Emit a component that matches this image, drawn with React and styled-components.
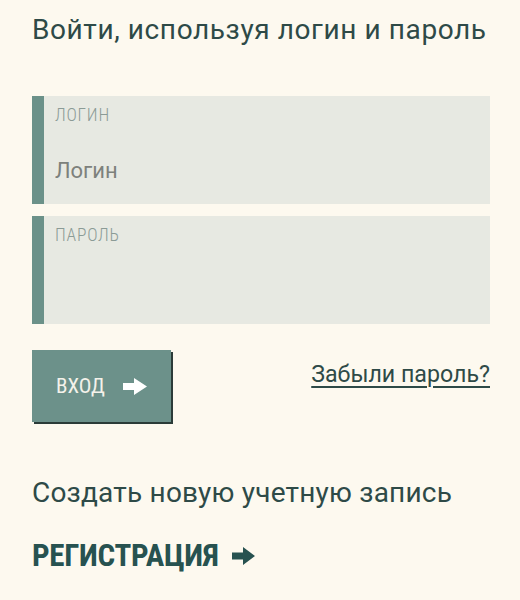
import React, { useState } from 'react';
import styled, { createGlobalStyle } from 'styled-components';

const GlobalStyle = createGlobalStyle`
  html, body {
    margin: 0;
    padding: 0;
    background: #fdf9ef;
  }
  body {
    font-family: Roboto, "Noto Sans", sans-serif;
    color: #2e4a47;
  }
`;

export default function App() {
  const [Login, setLogin] = useState('');
  const [Password, setPassword] = useState('');

  const onLoginHandler = event => {
    setLogin(event.currentTarget.value);
  };
  const onPasswordHandler = event => {
    setPassword(event.currentTarget.value);
  };
  const onSubmitHandler = event => {
    event.preventDefault();
  };

  return (
    <Page>
      <GlobalStyle />
      <Title>Войти, используя логин и пароль</Title>
      <Form onSubmit={onSubmitHandler}>
        <Field>
          <FieldLabel>Логин</FieldLabel>
          <FieldInput
            type="text"
            placeholder="Логин"
            value={Login}
            onChange={onLoginHandler}
          />
        </Field>
        <Field>
          <FieldLabel>Пароль</FieldLabel>
          <FieldInput
            type="password"
            value={Password}
            onChange={onPasswordHandler}
          />
        </Field>
        <Actions>
          <SubmitButton type="submit">
            вход
            <ButtonArrow viewBox="0 0 24 17" aria-hidden="true">
              <path d="M0 5h11V0l13 8.5L11 17v-5H0z" />
            </ButtonArrow>
          </SubmitButton>
          <ForgotLink href="#">Забыли пароль?</ForgotLink>
        </Actions>
      </Form>
      <Subtitle>Создать новую учетную запись</Subtitle>
      <RegisterLink href="#">
        Регистрация
        <RegisterArrow viewBox="0 0 23 18" aria-hidden="true">
          <path d="M0 5.5h11V0l12 9-12 9v-5.5H0z" />
        </RegisterArrow>
      </RegisterLink>
    </Page>
  );
}

const Page = styled.div`
  padding: 12px 30px 20px 32px;
`;

const Title = styled.h1`
  margin: 0 0 48px;
  font-size: 28px;
  font-weight: 400;
  line-height: 36px;
  letter-spacing: 0.6px;
  color: #2e4a47;
`;

const Form = styled.form`
  display: flex;
  flex-direction: column;
  gap: 12px;
`;

const Field = styled.label`
  display: flex;
  flex-direction: column;
  height: 108px;
  box-sizing: border-box;
  padding: 9px 16px 0 11px;
  background: #e7e9e2;
  border-left: 12px solid #6b9189;
`;

const FieldLabel = styled.span`
  font-family: "Roboto Condensed", Roboto, sans-serif;
  font-weight: 300;
  font-size: 17.5px;
  line-height: 21px;
  letter-spacing: 0.8px;
  text-transform: uppercase;
  color: #8b9b96;
`;

const FieldInput = styled.input`
  margin-top: 32px;
  height: 26px;
  border: none;
  outline: none;
  background: transparent;
  padding: 0;
  font-family: Roboto, "Noto Sans", sans-serif;
  font-size: 22px;
  line-height: 26px;
  color: #4a5a56;
  &::placeholder {
    color: #7d817c;
  }
`;

const Actions = styled.div`
  display: flex;
  justify-content: space-between;
  align-items: flex-start;
  margin-top: 14px;
`;

const SubmitButton = styled.button`
  display: flex;
  align-items: center;
  gap: 18px;
  width: 139px;
  height: 72px;
  padding: 0 0 0 24px;
  border: none;
  background: #6c918a;
  box-shadow: 2px 2px 0 #2b3b38;
  font-family: "Roboto Condensed", Roboto, sans-serif;
  font-size: 21px;
  text-transform: uppercase;
  color: #f4f2ea;
  cursor: pointer;
`;

const ButtonArrow = styled.svg`
  width: 24px;
  height: 17px;
  fill: #ffffff;
`;

const ForgotLink = styled.a`
  margin-top: 11px;
  font-size: 23.2px;
  line-height: 27px;
  color: #2e4a47;
  text-decoration: underline;
  text-decoration-thickness: 1.5px;
  text-underline-offset: 4px;
`;

const Subtitle = styled.p`
  margin: 53px 0 0;
  font-size: 28px;
  line-height: 36px;
  letter-spacing: 0.2px;
  color: #2e4a47;
`;

const RegisterLink = styled.a`
  display: flex;
  width: fit-content;
  align-items: center;
  gap: 13px;
  margin-top: 25px;
  font-family: "Roboto Condensed", Roboto, sans-serif;
  font-weight: 700;
  font-size: 31px;
  line-height: 40px;
  letter-spacing: -0.3px;
  text-transform: uppercase;
  color: #275250;
  text-decoration: none;
`;

const RegisterArrow = styled.svg`
  width: 23px;
  height: 18px;
  fill: #275250;
`;
